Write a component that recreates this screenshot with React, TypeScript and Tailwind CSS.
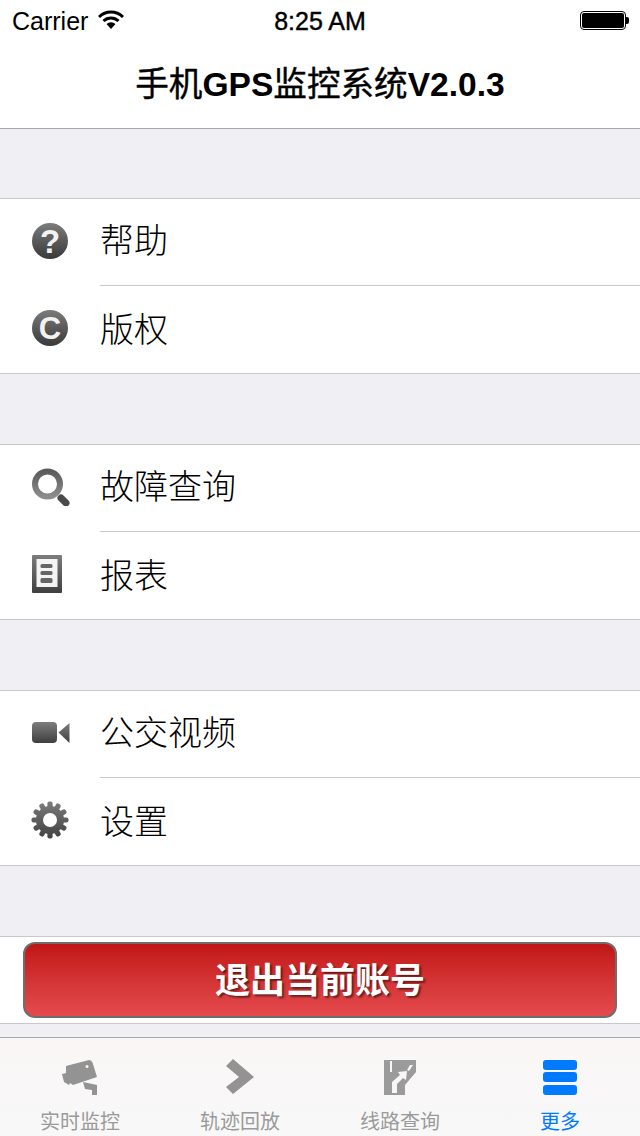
import type { ReactNode } from 'react';

const CJK = "font-['Liberation_Sans','Noto_Sans_CJK_SC',sans-serif]";

const IconDefs = () => (
  <svg width="0" height="0" className="absolute">
    <defs>
      <linearGradient id="metal" x1="0" y1="0" x2="0" y2="1">
        <stop offset="0" stopColor="#7d7d7d" />
        <stop offset="1" stopColor="#3f3f3f" />
      </linearGradient>
      <linearGradient id="ring" x1="0" y1="0" x2="0" y2="1">
        <stop offset="0" stopColor="#5c5c5c" />
        <stop offset="1" stopColor="#8c8c8c" />
      </linearGradient>
    </defs>
  </svg>
);

const HelpIcon = () => (
  <div className="flex h-9 w-9 items-center justify-center rounded-full bg-gradient-to-b from-[#7c7c7c] to-[#3a3a3a] text-[33px] font-bold leading-none text-[#f2f2f2] font-['Liberation_Sans',sans-serif]">
    ?
  </div>
);

const CopyrightIcon = () => (
  <div className="flex h-9 w-9 items-center justify-center rounded-full bg-gradient-to-b from-[#7c7c7c] to-[#3a3a3a] text-[31px] font-bold leading-none text-[#f2f2f2] font-['Liberation_Sans',sans-serif]">
    C
  </div>
);

const SearchIcon = () => (
  <svg width="38" height="38" viewBox="0 0 38 38">
    <circle cx="15.5" cy="16" r="12.5" fill="none" stroke="url(#ring)" strokeWidth="6" />
    <path d="M29 30 L34 35" stroke="#4a4a4a" strokeWidth="7" strokeLinecap="round" />
  </svg>
);

const ReportIcon = () => (
  <svg width="30" height="38" viewBox="0 0 30 38">
    <rect width="30" height="38" rx="1" fill="url(#metal)" />
    <rect x="4.5" y="4" width="21" height="28" fill="#f4f4f4" />
    <rect x="8.5" y="9" width="12" height="4" rx="1.5" fill="#666" />
    <rect x="8.5" y="16" width="12" height="4" rx="1.5" fill="#666" />
    <rect x="8.5" y="23" width="12" height="5" rx="1.5" fill="#666" />
  </svg>
);

const VideoIcon = () => (
  <svg width="38" height="22" viewBox="0 0 38 22">
    <rect width="25" height="21" rx="4" fill="url(#metal)" />
    <path d="M26.5 10.5 L37.5 1 V21 Z" fill="url(#metal)" />
  </svg>
);

const GearIcon = () => {
  const teeth = [0, 30, 60, 90, 120, 150, 180, 210, 240, 270, 300, 330];
  return (
    <svg className="-ml-[1px]" width="38" height="38" viewBox="0 0 38 38">
      <mask id="gearShape">
        <g fill="#fff">
          {teeth.map((a) => (
            <rect key={a} x="16.4" y="0.5" width="5.2" height="10" rx="2" transform={`rotate(${a} 19 19)`} />
          ))}
          <circle cx="19" cy="19" r="14" />
        </g>
        <circle cx="19" cy="19" r="7" fill="#000" />
      </mask>
      <rect width="38" height="38" fill="url(#metal)" mask="url(#gearShape)" />
    </svg>
  );
};

const Row = ({ icon, label, last }: { icon: ReactNode; label: string; last?: boolean }) => (
  <div className="flex h-[87px] items-stretch">
    <div className="flex w-[100px] shrink-0 items-center justify-start pb-[3px] pl-[32px]">{icon}</div>
    <div className={`flex flex-1 items-center text-[34px] font-light leading-none text-black ${last ? 'pb-[0px]' : 'border-b border-[#c8c7cc] pb-[3px]'}`}>
      {label}
    </div>
  </div>
);

const Section = ({ children }: { children: ReactNode }) => (
  <div className="border-y border-[#c8c7cc] bg-white">{children}</div>
);

const CameraTab = () => (
  <svg width="38" height="37" viewBox="12 7 38 37">
    <path d="M17 14 L40 8 Q42.5 8 43.5 10.5 L48 25 L24 33 L21 31 L20 33 L15 30 L13 22 L17 21 Z" fill="#939393" />
    <path d="M34 30 L48 33 L48 43 L43 43 L43 38 L36 37 Z" fill="#939393" />
    <circle cx="38" cy="14.5" r="1.5" fill="#f5f5f5" />
  </svg>
);

const ArrowTab = () => (
  <svg width="30" height="36" viewBox="0 0 30 36">
    <path d="M1 7 L8 0 L29 18 L8 35 L1 28 L14 18 Z" fill="#939393" />
  </svg>
);

const RouteTab = () => (
  <svg width="32" height="35" viewBox="14 8 32 35">
    <path d="M14 8 H46 V20 L35 33 V43 H14 Z" fill="#9b9b9b" />
    <path d="M20 9 H22 V20 H20 Z M40 13 H43 L39 19 L37 18 Z M28 20 L37 19 L36 28 L33 26 L27 32 V41 H22 V30 L30 23 Z" fill="#f7f7f7" />
  </svg>
);

const MoreTab = () => (
  <div className="flex h-[35px] w-[34px] flex-col justify-between">
    <div className="h-[10px] rounded-[3px] bg-[#007aff]" />
    <div className="h-[10px] rounded-[3px] bg-[#007aff]" />
    <div className="h-[10px] rounded-[3px] bg-[#007aff]" />
  </div>
);

const Tab = ({ icon, label, active }: { icon: ReactNode; label: string; active?: boolean }) => (
  <div className="flex flex-1 flex-col items-center">
    <div className="flex h-[38px] items-center justify-center">{icon}</div>
    <div className={`mt-[14px] text-[20px] leading-[24px] ${active ? 'text-[#007aff]' : 'text-[#9a9a9a]'}`}>{label}</div>
  </div>
);

export default function App() {
  return (
    <div className={`relative flex h-[1136px] w-[640px] flex-col overflow-hidden bg-[#efeff4] ${CJK}`}>
      <IconDefs />
      <div className="bg-white">
        <div className="relative flex h-10 items-center px-3 text-[25px] leading-none text-black">
          <span className="mt-[2px]">Carrier</span>
          <svg className="ml-[10px] mb-[1px]" width="26" height="20" viewBox="0 0 26 20">
            <path d="M1 7 A17 17 0 0 1 25 7" fill="none" stroke="#000" strokeWidth="3" />
            <path d="M5.5 11 A11 11 0 0 1 20.5 11" fill="none" stroke="#000" strokeWidth="3" />
            <path d="M13 19 L8.5 14 A6.5 6.5 0 0 1 17.5 14 Z" fill="#000" />
          </svg>
          <span className="absolute left-0 right-0 mt-[2px] text-center [-webkit-text-stroke:0.4px_black]">8:25 AM</span>
          <div className="ml-auto mr-[-1px] flex items-center">
            <div className="h-[19px] w-[46px] rounded-[4px] border border-black bg-white p-[1px]">
              <div className="h-full w-full rounded-[2px] bg-black" />
            </div>
            <div className="h-[7px] w-[3px] rounded-r-[2px] bg-black" />
          </div>
        </div>
        <div className="flex h-[89px] items-center justify-center border-b border-[#a7a7aa] pt-[2px] text-[33.6px] leading-none text-black [-webkit-text-stroke:0.4px_black]">
          手机<span className="font-bold [-webkit-text-stroke:0]">GPS</span>监控系统<span className="font-bold [-webkit-text-stroke:0]">V2.0.3</span>
        </div>
      </div>
      <div className="h-[69px]" />
      <Section>
        <Row icon={<HelpIcon />} label="帮助" />
        <Row icon={<CopyrightIcon />} label="版权" last />
      </Section>
      <div className="h-[70px]" />
      <Section>
        <Row icon={<SearchIcon />} label="故障查询" />
        <Row icon={<ReportIcon />} label="报表" last />
      </Section>
      <div className="h-[70px]" />
      <Section>
        <Row icon={<VideoIcon />} label="公交视频" />
        <Row icon={<GearIcon />} label="设置" last />
      </Section>
      <div className="h-[70px]" />
      <div className="h-[88px] border-y border-[#c8c7cc] bg-white px-[23px] pt-[5px]">
        <div className="flex h-[76px] items-center justify-center rounded-[12px] border-2 border-[#6e6e6e] bg-gradient-to-b from-[#c21414] to-[#e54a4d] text-[35px] font-bold leading-none text-white [text-shadow:2px_2px_2px_rgba(0,0,0,0.5)]">
          退出当前账号
        </div>
      </div>
      <div className="mt-auto flex h-[99px] border-t border-[#a7a7aa] bg-gradient-to-b from-[#faf6f6] to-[#f8f8f8] pt-[20px]">
        <Tab icon={<CameraTab />} label="实时监控" />
        <Tab icon={<ArrowTab />} label="轨迹回放" />
        <Tab icon={<RouteTab />} label="线路查询" />
        <Tab icon={<MoreTab />} label="更多" active />
      </div>
    </div>
  );
}
